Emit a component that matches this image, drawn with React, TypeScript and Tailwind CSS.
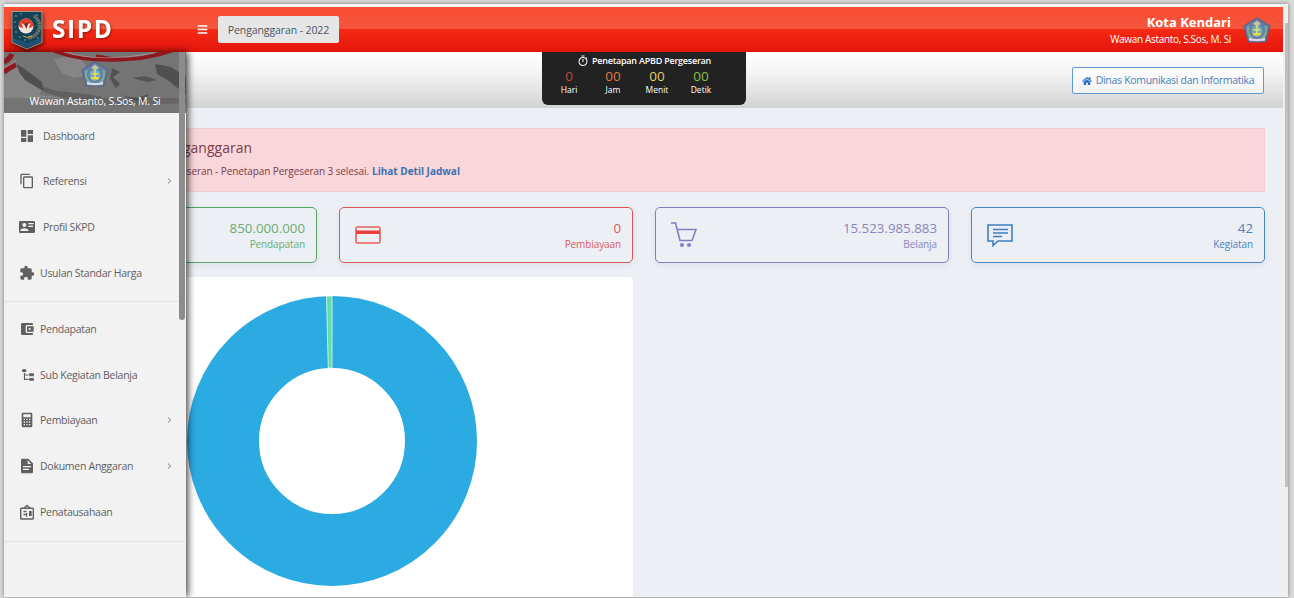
import type { ReactNode } from "react";
import { MdDashboard, MdContentCopy, MdExtension, MdAccountBalanceWallet, MdOutlineTimer } from "react-icons/md";
import { FaHome, FaBars } from "react-icons/fa";

const Mdi = ({ d, className = "size-4" }: { d: string; className?: string }) => (
  <svg viewBox="0 0 24 24" className={className} fill="currentColor" fillRule="evenodd">
    <path d={d} />
  </svg>
);

const ID_CARD =
  "M2,3H22C23.05,3 24,3.95 24,5V19C24,20.05 23.05,21 22,21H2C0.95,21 0,20.05 0,19V5C0,3.95 0.95,3 2,3M14,6V8H22V6H14M14,10V12H21V10H14M8,13.91C6,13.91 2,15 2,17V18H14V17C14,15 10,13.91 8,13.91M8,6A3,3 0 0,0 5,9A3,3 0 0,0 8,12A3,3 0 0,0 11,9A3,3 0 0,0 8,6Z";
const FILE_TREE = "M2,2H9V7H2V2M14,9H22V14H14V9M14,17H22V22H14V17M13,13H7V18.500H13V20.500H7L5,20.500V8H7V11H13V13Z";
const CALCULATOR =
  "M6,1H18A2,2 0 0,1 20,3V21A2,2 0 0,1 18,23H6A2,2 0 0,1 4,21V3A2,2 0 0,1 6,1M6.500,3.500V8H17.500V3.500H6.500M7,10V12H9V10H7M11,10V12H13V10H11M15,10V12H17V10H15M7,14V16H9V14H7M11,14V16H13V14H11M15,14V16H17V14H15M7,18V20H9V18H7M11,18V20H13V18H11M15,18V20H17V18H15Z";
const DOCUMENT =
  "M13,9H18.5L13,3.5V9M5,1H14L21,8V21A2,2 0 0,1 19,23H5C3.89,23 3,22.1 3,21V3C3,1.89 3.89,1 5,1M15,18V16H6V18H15M18,14V12H6V14H18Z";

const OfficeIcon = () => (
  <svg viewBox="0 0 16 16" className="size-4" fill="none" stroke="currentColor" strokeWidth="1.4">
    <rect x="1.700" y="4.200" width="12.600" height="10.800" rx="0.8" />
    <path d="M5 4L8 1.500L11 4M4.500 7.500h3M4.500 10.500h2M7.500 9v3.500M10.700 7v5M12 7v5" />
  </svg>
);

function NationalCrest() {
  return (
    <svg viewBox="0 0 32 40" className="h-10 w-8 drop-shadow-[1px_2px_2px_rgba(0,0,0,0.6)]">
      <path d="M1 1.5H31V32.500L16 39L1 32.500Z" fill="#164257" stroke="#a59a87" strokeWidth="1" />
      <path d="M2 28L16 33L30 28V32L16 38L2 32Z" fill="#1d5378" />
      <path d="M23 6A12 12 0 0 1 17 28" fill="none" stroke="#8f8b6a" strokeWidth="3.500" strokeDasharray="2 .6" opacity=".75" />
      <g fill="#8fbba8">
        <circle cx="5" cy="6" r=".8" /><circle cx="10" cy="4" r=".7" /><circle cx="4" cy="12" r=".7" />
        <circle cx="5" cy="22" r=".8" /><circle cx="9" cy="27" r=".7" /><circle cx="26" cy="5" r=".7" />
        <circle cx="14" cy="30" r=".7" /><circle cx="27" cy="28" r=".7" /><circle cx="4" cy="17" r=".6" />
      </g>
      <circle cx="15" cy="16" r="7.500" fill="#f1e5dd" />
      <path d="M7.500 16A7.500 7.500 0 0 1 22.500 16L19 18L15 15L11 18Z" fill="#e13b25" />
      <path d="M10 13L13 14.500L15 11L17 14.500L20 13L17.500 18L15 20L12.500 18Z" fill="#f3e9e2" />
      <path d="M13 14L15 11.500L17 14L15.500 19Z" fill="#8f2117" />
      <path d="M12 26Q16 29 21 26" fill="none" stroke="#c5a960" strokeWidth="1" />
    </svg>
  );
}

function CityCrest({ className }: { className: string }) {
  return (
    <svg viewBox="0 0 28 26" className={className}>
      <path d="M14 1L27 9L22.500 25H5.500L1 9Z" fill="#667fa7" stroke="#56648d" strokeWidth="1.200" />
      <path d="M14 3.500L18 7L14 9L10 7Z" fill="#c8c6a0" />
      <path d="M5.500 9Q3.500 18 9 21M22.500 9Q24.500 18 19 21" fill="none" stroke="#7fae8d" strokeWidth="2" />
      <ellipse cx="14" cy="14" rx="5.500" ry="6" fill="#6dabc1" />
      <path d="M13.200 8H14.800V12H17.500V13.500H14.800V17H13.200V13.500H10.500V12H13.200Z" fill="#eddc5c" />
      <path d="M9.500 16H18.500L17 18.500H11Z" fill="#f0d545" />
      <path d="M6 20.500Q14 23.500 22 20.500V23.500Q14 25 6 23.500Z" fill="#d8dae6" />
    </svg>
  );
}

function MapBackdrop() {
  return (
    <svg viewBox="0 0 182 61" className="absolute inset-0 size-full" preserveAspectRatio="none">
      <rect width="182" height="61" fill="#747474" />
      <path d="M0 24L13 15L23 23L38 34L36 43L60 46L84 51L118 54L182 51V61H0Z" fill="#858585" />
      <path d="M13 12L22 18L38 30L40 39L34 36L21 28L15 20Z" fill="#4f4f4f" />
      <path d="M50 8Q60 3 74 5L82 13L79 24L70 26L58 21Z" fill="#858585" />
      <path d="M38 34L53 39L82 42L99 45L90 48L60 46L40 40Z" fill="#606060" />
      <path d="M108 16L116 20L109 25L116 32L112 36L106 27Z" fill="#525252" />
      <path d="M128 26L141 24L153 28L143 30ZM117 43L132 46L145 42L139 51Z" fill="#555" />
      <path d="M151 12L167 15L182 25V43L165 29L153 22Z" fill="#505050" />
      <path d="M0 10Q6 7 8 2M0 20Q6 15 12 13" fill="none" stroke="#8e1720" strokeWidth="5" />
      <path d="M50 -1Q78 9 112 8T170 -2M92 4Q124 12 158 1" fill="none" stroke="#8e1720" strokeWidth="3.500" />
      <path d="M0 16Q8 12 12 8M60 0Q95 11 150 1" fill="none" stroke="#c8a0a0" strokeWidth=".6" />
      <rect width="182" height="15" y="46" fill="#000" opacity=".12" />
    </svg>
  );
}

type Item = { icon: ReactNode; label: string; text: string; more?: boolean };

function MenuRow({ icon, label, text, more }: Item) {
  return (
    <li className="flex h-[45.6px] items-center pr-[14px] pl-[15px]">
      <span className="flex w-[18px] shrink-0 justify-start text-[#606060]">{icon}</span>
      <span className={"text-[10.5px] leading-4 tracking-[-0.27px] whitespace-nowrap " + text}>{label}</span>
      {more && (
        <svg viewBox="0 0 6 8" className="ml-auto h-[6px] w-[5px]" fill="none" stroke="#777" strokeWidth="1.3">
          <path d="M1 .8L4.500 4L1 7.200" />
        </svg>
      )}
    </li>
  );
}

const topItems: Item[] = [
  { icon: <MdDashboard className="size-4" />, label: "Dashboard", text: "ml-[6px]" },
  { icon: <MdContentCopy className="size-4" />, label: "Referensi", text: "ml-[6px]", more: true },
  { icon: <Mdi d={ID_CARD} />, label: "Profil SKPD", text: "ml-[6px]" },
  { icon: <MdExtension className="size-4" />, label: "Usulan Standar Harga", text: "ml-[3px]" },
];
const bottomItems: Item[] = [
  { icon: <MdAccountBalanceWallet className="size-4" />, label: "Pendapatan", text: "ml-[3px]" },
  { icon: <Mdi d={FILE_TREE} className="ml-[2px] size-[14px]" />, label: "Sub Kegiatan Belanja", text: "ml-[3px]" },
  { icon: <Mdi d={CALCULATOR} />, label: "Pembiayaan", text: "ml-[3px]", more: true },
  { icon: <Mdi d={DOCUMENT} />, label: "Dokumen Anggaran", text: "ml-[3px]", more: true },
  { icon: <OfficeIcon />, label: "Penatausahaan", text: "ml-[3px]" },
];

function Sidebar() {
  return (
    <aside className="absolute top-[48px] bottom-0 left-0 z-10 flex w-[182px] flex-col bg-[#f2f2f2] text-[#606060] shadow-[2px_0_7px_rgba(0,0,0,0.75)]">
      <div className="relative flex h-[61px] shrink-0 flex-col items-center overflow-hidden pt-[9px]">
        <MapBackdrop />
        <CityCrest className="relative h-[26px] w-[28px]" />
        <span className="relative mt-[6px] text-[10.5px] leading-4 font-medium tracking-[-0.2px] whitespace-nowrap text-white">
          Wawan Astanto, S.Sos, M. Si
        </span>
      </div>
      <ul className="border-b border-[#e2e2e2] pb-[6px]">
        {topItems.map((i) => <MenuRow key={i.label} {...i} />)}
      </ul>
      <ul className="border-b border-[#e2e2e2] pt-[4px] pb-[7px]">
        {bottomItems.map((i) => <MenuRow key={i.label} {...i} />)}
      </ul>
      <div className="absolute top-0 right-[1px] h-[268px] w-[6px] rounded-b-sm bg-[#8c8c8c]" />
    </aside>
  );
}

function StatCard({ icon, value, label, tone }: { icon?: ReactNode; value: string; label: string; tone: string }) {
  return (
    <div className={"flex h-[56px] items-center justify-between rounded-[5px] border pr-[11px] pl-[15px] shadow-[0_2px_6px_rgba(120,130,180,0.12)] " + tone}>
      <span>{icon}</span>
      <div className="pt-[1px] text-right">
        <div className="text-[13.3px] leading-[17px]">{value}</div>
        <div className="text-[10px] leading-[14px] tracking-[-0.1px]">{label}</div>
      </div>
    </div>
  );
}

const countdown = [
  { n: "0", unit: "Hari", tone: "text-[#c5403c]" },
  { n: "00", unit: "Jam", tone: "text-[#e07840]" },
  { n: "00", unit: "Menit", tone: "text-[#e8cc6a]" },
  { n: "00", unit: "Detik", tone: "text-[#93bd45]" },
];

export default function App() {
  return (
    <div className="h-[598px] w-[1294px] overflow-hidden bg-[#d9d9d9] pt-[4px] pl-[4px] font-['Open_Sans','Noto_Sans',sans-serif]">
      <div className="relative flex h-[593px] w-[1284px] overflow-hidden bg-[#eceff3] shadow-[0_0_4px_rgba(0,0,0,0.45)]">
        <div className="flex w-[1279px] shrink-0 flex-col">
          <header className="flex h-[48px] shrink-0 items-center border-t-[3px] border-[#f7f7f7] bg-[linear-gradient(to_bottom,#fa4c33_0%,#f3563d_49%,#f52a14_50%,#e4140b_100%)] pr-[12px] pl-[7px] text-white">
            <NationalCrest />
            <span className="ml-[9px] w-[65px] text-[24.5px] leading-none font-bold tracking-[1.6px] whitespace-nowrap drop-shadow-[1px_1px_1px_rgba(0,0,0,0.4)]">SIPD</span>
            <FaBars className="ml-[80px] size-[11px]" />
            <button className="ml-[10px] h-[27px] w-[121px] rounded-[2px] bg-[#e6e6e6] pt-[3px] text-[10.5px] tracking-[-0.1px] whitespace-nowrap text-[#4b5560]">
              Penganggaran - 2022
            </button>
            <div className="ml-auto pt-[2px] text-right whitespace-nowrap">
              <div className="text-[13px] leading-[17px] font-bold">Kota Kendari</div>
              <div className="text-[10px] leading-[17px] tracking-[-0.33px]">Wawan Astanto, S.Sos, M. Si</div>
            </div>
            <CityCrest className="ml-[12px] h-[26px] w-[28px]" />
          </header>

          <section className="grid h-[56px] shrink-0 grid-cols-3 bg-[linear-gradient(to_bottom,#ffffff_0%,#f5f5f5_35%,#d3d3d3_100%)] pr-[19px]">
            <span />
            <div className="ml-[118px] h-[53px] w-[204px] rounded-b-[6px] bg-[#222] text-white">
              <div className="flex items-center justify-center gap-[3px] pt-[1px] text-[9px] leading-[15px] font-semibold tracking-[-0.23px] whitespace-nowrap">
                <MdOutlineTimer className="size-[12px]" />
                Penetapan APBD Pergeseran
              </div>
              <div className="flex pl-[5px]">
                {countdown.map((c) => (
                  <div key={c.unit} className="w-[44px] shrink-0 text-center">
                    <div className={"text-[13.5px] leading-[16px] " + c.tone}>{c.n}</div>
                    <div className="text-[8.5px] leading-[11px] font-medium">{c.unit}</div>
                  </div>
                ))}
              </div>
            </div>
            <button className="mt-[15px] flex h-[27px] w-[192px] items-center justify-center gap-[4px] justify-self-end rounded-[2px] border border-[#5a9bd3] bg-white/60 text-[10.5px] tracking-[-0.3px] whitespace-nowrap text-[#4a80bb]">
              <FaHome className="size-[10px] text-[#2d72c4]" />
              Dinas Komunikasi dan Informatika
            </button>
          </section>

          <main className="flex flex-col pt-[20px] pr-[18px] pl-[19px]">
            <div className="h-[64px] border border-[#f1cdd2] bg-[#f9d6da] pt-[9px] whitespace-nowrap text-[#794047]">
              <div className="w-[228px] text-right text-[14px] leading-[19px]">Penganggaran</div>
              <div className="mt-[6px] flex text-[10px] leading-[17px]">
                <span className="w-[345px] text-right tracking-[-0.08px]">Pergeseran - Penetapan Pergeseran 3 selesai.</span>
                <a className="ml-[3px] font-bold text-[#3c70b0]">Lihat Detil Jadwal</a>
              </div>
            </div>
            <div className="mt-[15px] grid grid-cols-4 gap-[22px]">
              <StatCard tone="border-[#57a463] text-[#6bac75]" value="850.000.000" label="Pendapatan" />
              <StatCard
                tone="border-[#dc5758] text-[#dc5b5b]" value="0" label="Pembiayaan"
                icon={
                  <svg viewBox="0 0 26 18" className="h-[18px] w-[26px]">
                    <rect x="1" y="1" width="24" height="16" rx="1.500" fill="none" stroke="#e4605d" strokeWidth="1.600" />
                    <rect x="1" y="4.500" width="24" height="3.500" fill="#ec3f3c" />
                  </svg>
                }
              />
              <StatCard
                tone="border-[#807fbd] text-[#8985bd]" value="15.523.985.883" label="Belanja"
                icon={
                  <svg viewBox="0 0 26 26" className="h-[26px] w-[26px]" fill="none" stroke="#817fc0" strokeWidth="1.600">
                    <path d="M0 1H4.500L9 18.500H21L25 7.500H6.500" />
                    <circle cx="11" cy="23" r="2" fill="#817fc0" stroke="none" />
                    <circle cx="18" cy="23" r="2" fill="#817fc0" stroke="none" />
                  </svg>
                }
              />
              <StatCard
                tone="border-[#4388c5] text-[#4c82bd]" value="42" label="Kegiatan"
                icon={
                  <svg viewBox="0 0 26 24" className="h-[24px] w-[26px]" fill="none" stroke="#3e7fc0" strokeWidth="1.600">
                    <path d="M1 2H25V18H11L6 22.500V18H1ZM6 6.500H21M6 10H21M6 13.500H15" />
                  </svg>
                }
              />
            </div>
            <div className="mt-[14px] h-[330px] w-[610px] shrink-0 rounded-[4px] bg-white pt-[18px] pl-[163px]">
              <svg viewBox="0 0 292 292" className="size-[292px]">
                <circle cx="146" cy="146" r="109" fill="none" stroke="#2caae2" strokeWidth="72" />
                <path d="M146 1V73H142.300L140.500 1Z" fill="#5fdda5" stroke="#e9faf2" strokeWidth=".8" />
              </svg>
            </div>
          </main>
        </div>
        <div className="flex w-[5px] flex-col items-end bg-[#efefef] pt-[19px]">
          <div className="h-[464px] w-[3px] bg-[#bfbfbf]" />
        </div>
        <Sidebar />
      </div>
    </div>
  );
}
